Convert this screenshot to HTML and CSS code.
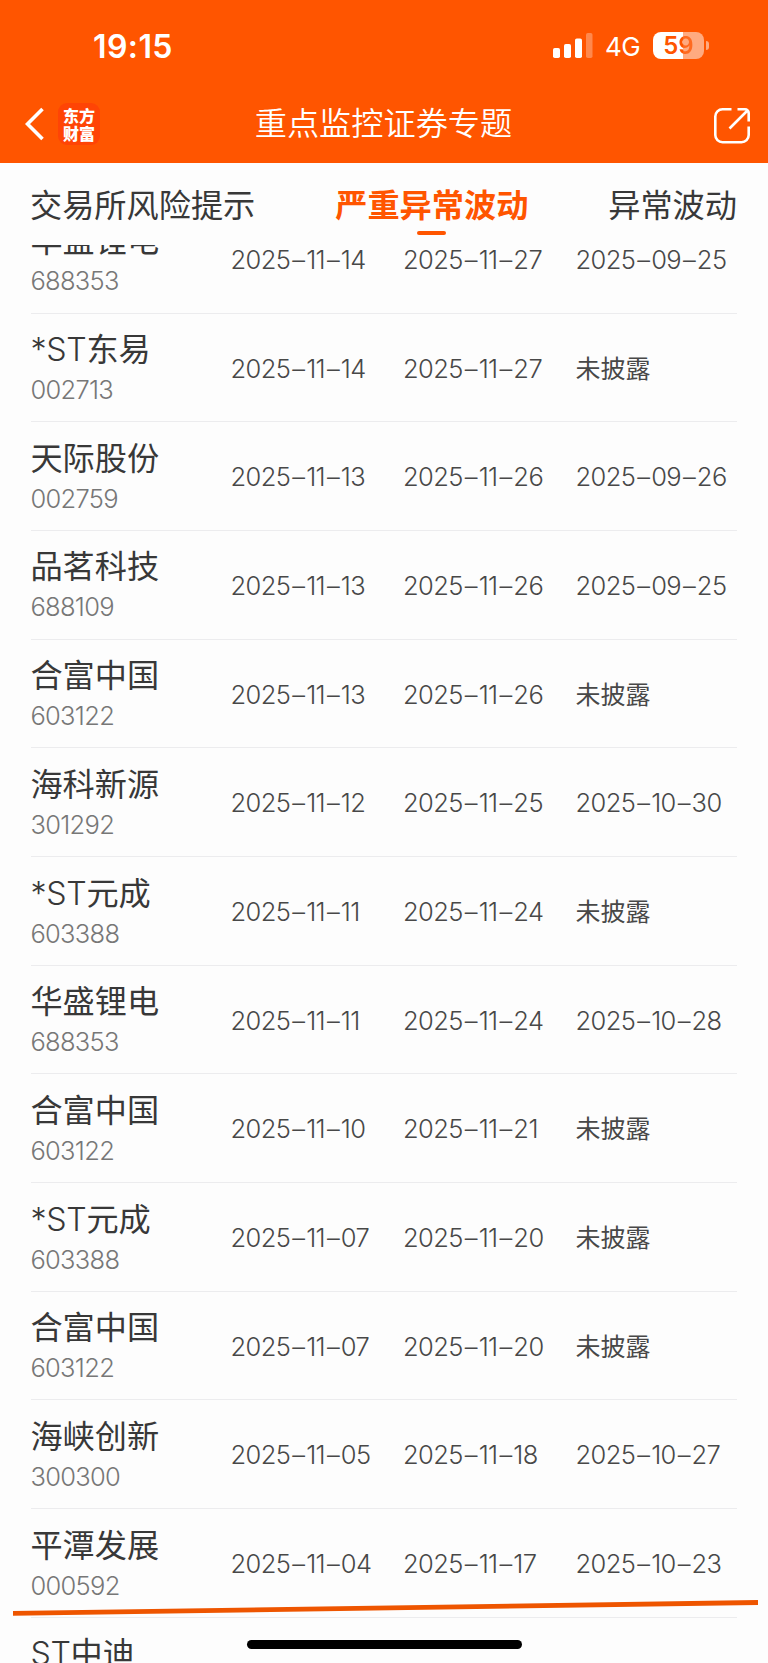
FILE: index.html
```html
<!DOCTYPE html>
<html lang="zh-CN">
<head>
<meta charset="utf-8">
<title>重点监控证券专题</title>
<link rel="stylesheet" href="styles.css">
</head>
<body>
<div class="screen">
  <header class="header">
    <div class="status">
      <span class="time">19:15</span>
      <div class="indicators">
        <svg class="signal" width="40" height="26" viewBox="0 0 40 26" fill="#fff">
          <rect x="0" y="15" width="7" height="10" rx="1.8"/>
          <rect x="11" y="11" width="7" height="14" rx="1.8"/>
          <rect x="22" y="5.500" width="7" height="19.500" rx="1.800"/>
          <rect x="33" y="0" width="6.500" height="25" rx="1.800" opacity=".3"/>
        </svg>
        <span class="network">4G</span>
        <div class="battery"><span class="level"><b class="dark">5</b><b class="light">9</b></span><i class="nub"></i></div>
      </div>
    </div>
    <nav class="nav">
      <div class="nav-left">
        <svg width="20" height="34" viewBox="0 0 20 34" fill="none" stroke="#fff" stroke-width="3.600"><path d="M17.500 2 2.500 17 17.500 32"/></svg>
        <div class="brand"><span>东方</span><span>财富</span></div>
      </div>
      <h1 class="title">重点监控证券专题</h1>
      <svg class="share" width="38" height="38" viewBox="0 0 38 38" fill="none" stroke="#fff" stroke-width="2.600"><path d="M18.500 2.300H9.500A7.200 7.200 0 0 0 2.300 9.500V28A7.200 7.200 0 0 0 9.500 35.200H28.500A7.200 7.200 0 0 0 35.700 28V19.500M24.500 2.300H32A3.700 3.700 0 0 1 35.700 6V14.500M34.500 3.500 16.500 21.500"/></svg>
    </nav>
  </header>
  <div class="tabs">
    <span class="tab">交易所风险提示</span>
    <span class="tab active">严重异常波动</span>
    <span class="tab">异常波动</span>
  </div>
  <main class="list">
    <div class="row"><div class="stock"><span class="name">华盛锂电</span><span class="code">688353</span></div><span class="date">2025<i>–</i>11<i>–</i>14</span><span class="date">2025<i>–</i>11<i>–</i>27</span><span class="date">2025<i>–</i>09<i>–</i>25</span></div>
    <div class="row"><div class="stock"><span class="name"><span class="latin">*ST</span>东易</span><span class="code">002713</span></div><span class="date">2025<i>–</i>11<i>–</i>14</span><span class="date">2025<i>–</i>11<i>–</i>27</span><span class="date none">未披露</span></div>
    <div class="row"><div class="stock"><span class="name">天际股份</span><span class="code">002759</span></div><span class="date">2025<i>–</i>11<i>–</i>13</span><span class="date">2025<i>–</i>11<i>–</i>26</span><span class="date">2025<i>–</i>09<i>–</i>26</span></div>
    <div class="row"><div class="stock"><span class="name">品茗科技</span><span class="code">688109</span></div><span class="date">2025<i>–</i>11<i>–</i>13</span><span class="date">2025<i>–</i>11<i>–</i>26</span><span class="date">2025<i>–</i>09<i>–</i>25</span></div>
    <div class="row"><div class="stock"><span class="name">合富中国</span><span class="code">603122</span></div><span class="date">2025<i>–</i>11<i>–</i>13</span><span class="date">2025<i>–</i>11<i>–</i>26</span><span class="date none">未披露</span></div>
    <div class="row"><div class="stock"><span class="name">海科新源</span><span class="code">301292</span></div><span class="date">2025<i>–</i>11<i>–</i>12</span><span class="date">2025<i>–</i>11<i>–</i>25</span><span class="date">2025<i>–</i>10<i>–</i>30</span></div>
    <div class="row"><div class="stock"><span class="name"><span class="latin">*ST</span>元成</span><span class="code">603388</span></div><span class="date">2025<i>–</i>11<i>–</i>11</span><span class="date">2025<i>–</i>11<i>–</i>24</span><span class="date none">未披露</span></div>
    <div class="row"><div class="stock"><span class="name">华盛锂电</span><span class="code">688353</span></div><span class="date">2025<i>–</i>11<i>–</i>11</span><span class="date">2025<i>–</i>11<i>–</i>24</span><span class="date">2025<i>–</i>10<i>–</i>28</span></div>
    <div class="row"><div class="stock"><span class="name">合富中国</span><span class="code">603122</span></div><span class="date">2025<i>–</i>11<i>–</i>10</span><span class="date">2025<i>–</i>11<i>–</i>21</span><span class="date none">未披露</span></div>
    <div class="row"><div class="stock"><span class="name"><span class="latin">*ST</span>元成</span><span class="code">603388</span></div><span class="date">2025<i>–</i>11<i>–</i>07</span><span class="date">2025<i>–</i>11<i>–</i>20</span><span class="date none">未披露</span></div>
    <div class="row"><div class="stock"><span class="name">合富中国</span><span class="code">603122</span></div><span class="date">2025<i>–</i>11<i>–</i>07</span><span class="date">2025<i>–</i>11<i>–</i>20</span><span class="date none">未披露</span></div>
    <div class="row"><div class="stock"><span class="name">海峡创新</span><span class="code">300300</span></div><span class="date">2025<i>–</i>11<i>–</i>05</span><span class="date">2025<i>–</i>11<i>–</i>18</span><span class="date">2025<i>–</i>10<i>–</i>27</span></div>
    <div class="row"><div class="stock"><span class="name">平潭发展</span><span class="code">000592</span></div><span class="date">2025<i>–</i>11<i>–</i>04</span><span class="date">2025<i>–</i>11<i>–</i>17</span><span class="date">2025<i>–</i>10<i>–</i>23</span></div>
    <div class="row"><div class="stock"><span class="name"><span class="latin">ST</span>中迪</span></div></div>
  </main>
  <svg class="marker" width="745" height="18" viewBox="0 0 745 18"><path d="M0 13.400 745 2.500" stroke="#ee5500" stroke-width="4.800"/></svg>
  <div class="home-bar"></div>
</div>
</body>
</html>
```
FILE: styles.css
```css
* { box-sizing: border-box; }
body { margin: 0; background: #fdfdfd; }
.screen {
  position: relative;
  display: flex;
  flex-direction: column;
  width: 768px;
  height: 1663px;
  overflow: hidden;
  background: #fdfdfd;
  color: #383838;
  font-family: Inter, "Noto Sans CJK SC", sans-serif;
}
.header { flex: none; height: 163px; background: #f50; color: #fff; }
.status { display: flex; justify-content: space-between; height: 82px; padding: 26px 59px 0 93px; }
.time { font-size: 32px; font-weight: 600; line-height: 41px; letter-spacing: 0.4px; }
.indicators { display: flex; align-items: center; height: 39px; }
.network { margin-left: 12px; font-size: 26px; line-height: 39px; letter-spacing: -0.5px; width: 48px; padding-top: 1px; }
.battery { display: flex; align-items: center; gap: 2px; }
.level {
  display: flex;
  justify-content: center;
  width: 51px;
  height: 27px;
  border-radius: 8px;
  background: linear-gradient(90deg, #fff 30px, #ffaa80 30px);
  font-size: 24px;
  line-height: 27px;
}
.level b { font-weight: 600; }
.dark { color: #f50; }
.light { color: transparent; background: linear-gradient(90deg, #f50 5px, #ff6a20 5px); -webkit-background-clip: text; background-clip: text; }
.nub { width: 3px; height: 9px; border-radius: 0 3px 3px 0; background: #ffaa80; }
.nav { display: grid; grid-template-columns: 1fr auto 1fr; align-items: center; height: 81px; padding: 0 17px 0 25px; }
.nav-left { display: flex; align-items: center; gap: 13px; padding-top: 3px; }
.brand {
  display: flex;
  flex-direction: column;
  align-items: center;
  justify-content: center;
  width: 42px;
  height: 42px;
  border-radius: 9px;
  background: #ff4405;
  font: 900 16px/18px "Noto Sans CJK SC", sans-serif;
}
.title { margin: -3px 0 0 -9px; font: 350 32.200px/48px "Noto Sans CJK SC", sans-serif; }
.share { justify-self: end; margin-top: 7px; }
.tabs { flex: none; display: flex; justify-content: space-between; height: 82px; padding: 16px 31px 0 30px; font: 400 32.200px/48px "Noto Sans CJK SC", sans-serif; }
.tab { display: flex; flex-direction: column; align-items: center; }
.active { color: #f50; font-weight: 700; }
.active::after { content: ""; width: 29px; height: 4px; margin-top: 4px; border-radius: 2px; background: #f50; }
.list { flex: 1; min-height: 0; padding: 0 31px; overflow: hidden; }
.row {
  display: grid;
  grid-template-columns: 200px 172.5px 172.5px 1fr;
  align-items: center;
  height: 108.7px;
  border-bottom: 1.500px solid #ececee;
}
.row:first-child { margin-top: -40.2px; }
.row:last-child { border: 0; }
.stock { display: flex; flex-direction: column; align-self: start; margin-left: -0.600px; padding-top: 12.600px; }
.name { font-size: 32.200px; line-height: 48px; }
.latin { font-weight: 350; letter-spacing: -0.300px; }
.code { color: #777; font-size: 25.500px; font-weight: 350; line-height: 32px; letter-spacing: -0.700px; }
.date { padding-top: 2.400px; margin-left: -0.500px; color: #484848; font-size: 25.500px; font-weight: 350; line-height: 36px; letter-spacing: -0.600px; white-space: nowrap; }
.date i { display: inline-block; margin: 0 1.700px 0 2px; font-style: normal; }
.none { font-size: 25px; font-weight: 400; letter-spacing: 0; }
.marker { position: absolute; left: 13px; top: 1600px; }
.home-bar { position: absolute; left: 247px; top: 1640px; width: 275px; height: 9px; border-radius: 5px; background: #000; }
```
